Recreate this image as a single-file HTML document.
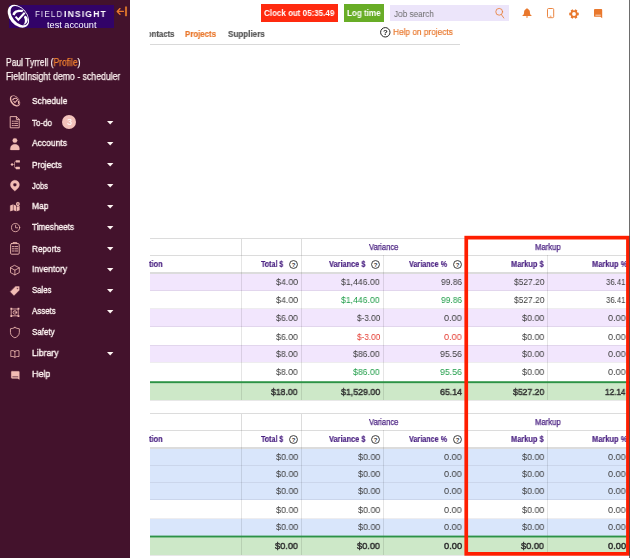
<!DOCTYPE html>
<html lang="en"><head><meta charset="utf-8"><title>FieldInsight - Projects</title><style>
html,body{margin:0;padding:0;background:#fff;}
body{width:630px;height:558px;position:relative;overflow:hidden;font-family:"Liberation Sans",sans-serif;}
.t{will-change:transform;position:absolute;white-space:nowrap;line-height:1;transform-origin:0 0;}
#w{position:absolute;left:0;top:0;width:630px;height:558px;}
.b{position:absolute;}
svg{position:absolute;overflow:visible;}
</style></head>
<body>
<div id="w">
<div class="b" style="left:0.00px;top:0.00px;width:130.00px;height:558.00px;background:#43122c;"></div>
<div class="b" style="left:8.60px;top:4.50px;width:105.20px;height:23.20px;background:#320368;"></div>
<svg style="left:6px;top:2px" width="28" height="28" viewBox="0 0 28 28">
<g transform="translate(12.4 14.3) rotate(50)">
<path fill="#fff" fill-rule="evenodd" d="M-13.00 0.00 A13 8.7 0 1 0 13.00 0.00 A13 8.7 0 1 0 -13.00 0.00 Z M-11.10 -1.15 A11.2 6.8 0 1 0 11.30 -1.15 A11.2 6.8 0 1 0 -11.10 -1.15 Z"/>
</g>
<g transform="scale(0.050176)" fill="#fff">
<path d="M130 255 C134 185 200 138 345 158 L326 204 C250 186 192 204 172 268 Z"/>
<path d="M378 268 C455 300 465 410 338 464 C386 420 386 350 356 304 Z"/>
<path d="M190 292 L246 352 L372 214" fill="none" stroke="#fff" stroke-width="40"/>
</g>
</svg>
<span class="t" style="left:34.50px;top:10.00px;font-size:8.9px;color:#e9e2f3;transform:scaleX(0.9093);letter-spacing:1.2px;">FIELD</span>
<span class="t" style="left:64.40px;top:10.00px;font-size:8.9px;color:#fff;transform:scaleX(0.9655);font-weight:700;letter-spacing:1.2px;">INSIGHT</span>
<span class="t" style="left:46.70px;top:21.00px;font-size:9.1px;color:#fff;transform:scaleX(1.0088);">test account</span>
<svg style="left:0;top:0" width="130" height="24" viewBox="0 0 130 24" fill="none" stroke="#e9782d">
<path d="M117.3 11.4 H123.4 M120 8.6 L117.2 11.4 L120 14.2" stroke-width="1.35" stroke-linecap="round" stroke-linejoin="round"/>
<path d="M126 6.5 V16.2" stroke-width="2.1" stroke="#cf6c2b"/></svg>
<span class="t" style="left:5.60px;top:58.00px;font-size:10px;color:#fff5f3;transform:scaleX(0.8491);-webkit-text-stroke:0.25px #fff5f3;">Paul Tyrrell (<span style="color:#f0812f;-webkit-text-stroke:0.25px #f0812f">Profile</span>)</span>
<span class="t" style="left:5.60px;top:72.00px;font-size:10px;color:#fff5f3;transform:scaleX(0.8721);-webkit-text-stroke:0.25px #fff5f3;">FieldInsight demo - scheduler</span>
<span class="t" style="left:31.60px;top:96.00px;font-size:9.9px;color:#fff5f3;transform:scaleX(0.8575);-webkit-text-stroke:0.38px #fff5f3;">Schedule</span>
<span class="t" style="left:31.60px;top:118.00px;font-size:9.9px;color:#fff5f3;transform:scaleX(0.8076);-webkit-text-stroke:0.38px #fff5f3;">To-do</span>
<svg style="left:107.2px;top:121.30px" width="6.4" height="3.4" viewBox="0 0 6.4 3.4"><path d="M0 0 H6.4 L3.2 3.4 Z" fill="#fff5f3"/></svg>
<span class="t" style="left:31.60px;top:138.00px;font-size:9.9px;color:#fff5f3;transform:scaleX(0.8595);-webkit-text-stroke:0.38px #fff5f3;">Accounts</span>
<svg style="left:107.2px;top:142.10px" width="6.4" height="3.4" viewBox="0 0 6.4 3.4"><path d="M0 0 H6.4 L3.2 3.4 Z" fill="#fff5f3"/></svg>
<span class="t" style="left:31.60px;top:160.00px;font-size:9.9px;color:#fff5f3;transform:scaleX(0.8361);-webkit-text-stroke:0.38px #fff5f3;">Projects</span>
<svg style="left:107.2px;top:163.30px" width="6.4" height="3.4" viewBox="0 0 6.4 3.4"><path d="M0 0 H6.4 L3.2 3.4 Z" fill="#fff5f3"/></svg>
<span class="t" style="left:31.60px;top:181.00px;font-size:9.9px;color:#fff5f3;transform:scaleX(0.7603);-webkit-text-stroke:0.38px #fff5f3;">Jobs</span>
<svg style="left:107.2px;top:184.40px" width="6.4" height="3.4" viewBox="0 0 6.4 3.4"><path d="M0 0 H6.4 L3.2 3.4 Z" fill="#fff5f3"/></svg>
<span class="t" style="left:31.60px;top:201.00px;font-size:9.9px;color:#fff5f3;transform:scaleX(0.8568);-webkit-text-stroke:0.38px #fff5f3;">Map</span>
<svg style="left:107.2px;top:205.20px" width="6.4" height="3.4" viewBox="0 0 6.4 3.4"><path d="M0 0 H6.4 L3.2 3.4 Z" fill="#fff5f3"/></svg>
<span class="t" style="left:31.60px;top:222.00px;font-size:9.9px;color:#fff5f3;transform:scaleX(0.8287);-webkit-text-stroke:0.38px #fff5f3;">Timesheets</span>
<svg style="left:107.2px;top:226.30px" width="6.4" height="3.4" viewBox="0 0 6.4 3.4"><path d="M0 0 H6.4 L3.2 3.4 Z" fill="#fff5f3"/></svg>
<span class="t" style="left:31.60px;top:244.00px;font-size:9.9px;color:#fff5f3;transform:scaleX(0.8279);-webkit-text-stroke:0.38px #fff5f3;">Reports</span>
<svg style="left:107.2px;top:247.30px" width="6.4" height="3.4" viewBox="0 0 6.4 3.4"><path d="M0 0 H6.4 L3.2 3.4 Z" fill="#fff5f3"/></svg>
<span class="t" style="left:31.60px;top:264.00px;font-size:9.9px;color:#fff5f3;transform:scaleX(0.8619);-webkit-text-stroke:0.38px #fff5f3;">Inventory</span>
<svg style="left:107.2px;top:268.00px" width="6.4" height="3.4" viewBox="0 0 6.4 3.4"><path d="M0 0 H6.4 L3.2 3.4 Z" fill="#fff5f3"/></svg>
<span class="t" style="left:31.60px;top:285.00px;font-size:9.9px;color:#fff5f3;transform:scaleX(0.7834);-webkit-text-stroke:0.38px #fff5f3;">Sales</span>
<svg style="left:107.2px;top:288.80px" width="6.4" height="3.4" viewBox="0 0 6.4 3.4"><path d="M0 0 H6.4 L3.2 3.4 Z" fill="#fff5f3"/></svg>
<span class="t" style="left:31.60px;top:306.00px;font-size:9.9px;color:#fff5f3;transform:scaleX(0.7977);-webkit-text-stroke:0.38px #fff5f3;">Assets</span>
<svg style="left:107.2px;top:310.30px" width="6.4" height="3.4" viewBox="0 0 6.4 3.4"><path d="M0 0 H6.4 L3.2 3.4 Z" fill="#fff5f3"/></svg>
<span class="t" style="left:31.60px;top:327.00px;font-size:9.9px;color:#fff5f3;transform:scaleX(0.8088);-webkit-text-stroke:0.38px #fff5f3;">Safety</span>
<span class="t" style="left:31.60px;top:348.00px;font-size:9.9px;color:#fff5f3;transform:scaleX(0.8790);-webkit-text-stroke:0.38px #fff5f3;">Library</span>
<svg style="left:107.2px;top:352.30px" width="6.4" height="3.4" viewBox="0 0 6.4 3.4"><path d="M0 0 H6.4 L3.2 3.4 Z" fill="#fff5f3"/></svg>
<span class="t" style="left:31.60px;top:369.00px;font-size:9.9px;color:#fff5f3;transform:scaleX(0.9037);-webkit-text-stroke:0.38px #fff5f3;">Help</span>
<div class="b" style="left:61.9px;top:115.4px;width:14px;height:14px;border-radius:50%;background:#f3c2bb"></div>
<span class="t" style="left:66.60px;top:118.00px;font-size:9px;color:#fff;transform:scaleX(0.9190);">3</span>
<svg style="left:9.0px;top:94.4px" width="13.6" height="13.6" viewBox="0 0 28 28">
<g transform="translate(12.4 14.3) rotate(50)">
<path fill="#f2bcb4" fill-rule="evenodd" d="M-13.00 0.00 A13 8.7 0 1 0 13.00 0.00 A13 8.7 0 1 0 -13.00 0.00 Z M-11.10 -1.15 A11.2 6.8 0 1 0 11.30 -1.15 A11.2 6.8 0 1 0 -11.10 -1.15 Z"/>
</g>
<g transform="scale(0.050176)" fill="#f2bcb4">
<path d="M130 255 C134 185 200 138 345 158 L326 204 C250 186 192 204 172 268 Z"/>
<path d="M378 268 C455 300 465 410 338 464 C386 420 386 350 356 304 Z"/>
<path d="M190 292 L246 352 L372 214" fill="none" stroke="#f2bcb4" stroke-width="44"/>
</g>
</svg>
<svg style="left:10.3px;top:116.2px" width="9.8" height="12.4" viewBox="0 0 9.8 12.4" fill="none" stroke="#f2bcb4" stroke-width="0.9" stroke-linecap="round" stroke-linejoin="round"><path d="M0.6 0.6 H6.4 L9.2 3.4 V11.8 H0.6 Z"/><path d="M6.4 0.6 V3.4 H9.2"/><path d="M2.2 5.2 H3.4 M4.6 5.2 H7.6 M2.2 7.4 H3.4 M4.6 7.4 H7.6 M2.2 9.6 H3.4 M4.6 9.6 H7.6"/></svg>
<svg style="left:10.3px;top:137.5px" width="9.8" height="12.3" viewBox="0 0 9.8 12.3" fill="#f2bcb4" stroke="#f2bcb4" stroke-width="0.2" stroke-linecap="round" stroke-linejoin="round"><circle cx="4.9" cy="2.5" r="2.3"/><path d="M0.3 11.2 C0.3 7.6 2.4 6.2 4.9 6.2 C7.4 6.2 9.5 7.6 9.5 11.2 C9.5 11.8 9.2 12.1 8.6 12.1 H1.2 C0.6 12.1 0.3 11.8 0.3 11.2 Z"/></svg>
<svg style="left:10px;top:160px" width="10.4" height="9.6" viewBox="10 160 10.4 9.6" fill="#f2bcb4">
<path d="M12.05 162.9 L13.6 164.45 L12.05 166 L10.5 164.45 Z"/>
<path d="M13.4 164.45 H14.5 M15.8 161.4 C14.7 161.4 14.5 162 14.5 163 V165.9 C14.5 166.9 14.7 168 15.8 168" fill="none" stroke="#f2bcb4" stroke-width="0.7" opacity="0.8"/>
<rect x="15.7" y="160.2" width="4.2" height="2.4" rx="0.4"/><rect x="15.7" y="166.8" width="4.2" height="2.4" rx="0.4"/>
</svg>
<svg style="left:10.1px;top:180.2px" width="9.8" height="11.3" viewBox="0 0 9.4 10.8" fill="#f2bcb4" stroke="#f2bcb4" stroke-width="0.2" stroke-linecap="round" stroke-linejoin="round"><path fill-rule="evenodd" d="M4.7 0.2 A4.4 4.4 0 0 1 9.1 4.6 C9.1 7.2 6 9.6 4.7 10.7 C3.4 9.6 0.3 7.2 0.3 4.6 A4.4 4.4 0 0 1 4.7 0.2 Z M4.7 2.9 A1.7 1.7 0 1 0 4.7 6.3 A1.7 1.7 0 1 0 4.7 2.9 Z"/></svg>
<svg style="left:10.3px;top:202.2px" width="9.9" height="9.4" viewBox="0 0 9.9 9.4" fill="#f2bcb4" stroke="#f2bcb4" stroke-width="0.1" stroke-linecap="round" stroke-linejoin="round"><path d="M0.2 3.6 L2.9 2.6 V8.4 L0.2 9.3 Z M3.5 2.6 L6.2 3.8 V9.3 L3.5 8.3 Z M6.8 5 L9.6 4 V8.3 L6.8 9.3 Z"/><path fill-rule="evenodd" d="M7.9 0.1 A1.9 1.9 0 0 1 9.8 2 C9.8 3.1 8.6 4 7.9 4.8 C7.2 4 6 3.1 6 2 A1.9 1.9 0 0 1 7.9 0.1 Z M7.9 1.3 A0.7 0.7 0 1 0 7.9 2.7 A0.7 0.7 0 1 0 7.9 1.3Z"/></svg>
<svg style="left:10.6px;top:223.3px" width="9.2" height="9.2" viewBox="0 0 9.2 9.2" fill="none" stroke="#f2bcb4" stroke-width="0.8" stroke-linecap="round" stroke-linejoin="round"><circle cx="4.6" cy="4.6" r="4.1"/><path d="M4.6 2.2 V4.8 H6.6"/></svg>
<svg style="left:10.3px;top:241.8px" width="9.8" height="12.8" viewBox="0 0 9.8 12.8" fill="none" stroke="#f2bcb4" stroke-width="0.9" stroke-linecap="round" stroke-linejoin="round"><rect x="0.6" y="1.6" width="8.6" height="10.6" rx="1"/><path d="M3 1.6 V0.6 H6.8 V1.6" /><path d="M2.3 4.6 H3.6 M4.8 4.6 H7.6 M2.3 6.8 H3.6 M4.8 6.8 H7.6 M2.3 9 H3.6 M4.8 9 H7.6"/></svg>
<svg style="left:10.3px;top:264.5px" width="9.8" height="10.4" viewBox="0 0 9.8 10.4" fill="none" stroke="#f2bcb4" stroke-width="0.8" stroke-linecap="round" stroke-linejoin="round"><path d="M4.9 0.5 L9.3 2.8 V7.6 L4.9 9.9 L0.5 7.6 V2.8 Z M0.5 2.8 L4.9 5.2 L9.3 2.8 M4.9 5.2 V9.9"/></svg>
<svg style="left:10.3px;top:285.8px" width="9.8" height="9.8" viewBox="0 0 9.8 9.8" fill="#f2bcb4" stroke="#f2bcb4" stroke-width="0.4" stroke-linecap="round" stroke-linejoin="round"><path fill-rule="evenodd" d="M5.6 0.6 L9.2 0.6 L9.2 4.2 L4 9.4 L0.4 5.8 Z M7.5 1.6 A0.8 0.8 0 1 0 7.5 3.2 A0.8 0.8 0 1 0 7.5 1.6Z"/></svg>
<svg style="left:10.3px;top:306.8px" width="9.8" height="10.8" viewBox="0 0 9.8 10.8" fill="none" stroke="#f2bcb4" stroke-width="0.8" stroke-linecap="round" stroke-linejoin="round"><rect x="1.6" y="2" width="6.6" height="6.8"/><circle cx="4.9" cy="5.4" r="1.8"/><path d="M4.9 4.4 V5.5 H5.7" stroke-width="0.6"/><rect x="0.4" y="0.8" width="1.8" height="1.8" fill="#f2bcb4" stroke="none"/><rect x="7.6" y="0.8" width="1.8" height="1.8" fill="#f2bcb4" stroke="none"/><rect x="0.4" y="8.2" width="1.8" height="1.8" fill="#f2bcb4" stroke="none"/><rect x="7.6" y="8.2" width="1.8" height="1.8" fill="#f2bcb4" stroke="none"/></svg>
<svg style="left:10.4px;top:327.3px" width="9.8" height="11.2" viewBox="0 0 9.4 10.8" fill="none" stroke="#f2bcb4" stroke-width="0.8" stroke-linecap="round" stroke-linejoin="round"><path d="M4.7 0.5 C6 1.2 7.6 1.6 9 1.7 V5.2 C9 8 6.8 9.7 4.7 10.4 C2.6 9.7 0.4 8 0.4 5.2 V1.7 C1.8 1.6 3.4 1.2 4.7 0.5 Z"/></svg>
<svg style="left:10.3px;top:350.3px" width="9.8" height="8" viewBox="0 0 9.8 8" fill="none" stroke="#f2bcb4" stroke-width="0.8" stroke-linecap="round" stroke-linejoin="round"><path d="M4.9 1.4 C3.8 0.5 2.2 0.4 0.8 0.7 V6.6 C2.2 6.3 3.8 6.5 4.9 7.3 C6 6.5 7.6 6.3 9 6.6 V0.7 C7.6 0.4 6 0.5 4.9 1.4 Z M4.9 1.4 V7.3"/></svg>
<svg style="left:10.7px;top:370.5px" width="8.6" height="8.8" viewBox="0 0 8.6 8.8" fill="#f2bcb4" stroke="#f2bcb4" stroke-width="0.2" stroke-linecap="round" stroke-linejoin="round"><path d="M1 0.2 H7.6 A0.8 0.8 0 0 1 8.4 1 V8.6 L6.6 7.4 H1 A0.8 0.8 0 0 1 0.2 6.6 V1 A0.8 0.8 0 0 1 1 0.2 Z"/><path d="M1.8 5.8 H6.8" stroke="#43122c" stroke-width="0.7"/></svg>
<div class="b" style="left:261.00px;top:4.00px;width:76.90px;height:17.70px;background:#ff2a0f;"></div>
<span class="t" style="left:263.90px;top:9.00px;font-size:8.4px;color:#fff;transform:scaleX(0.9544);font-weight:700;">Clock out 05:35.49</span>
<div class="b" style="left:344.30px;top:4.00px;width:39.60px;height:17.50px;background:#68ad26;"></div>
<span class="t" style="left:347.40px;top:9.00px;font-size:8.4px;color:#fff;transform:scaleX(0.9629);font-weight:700;">Log time</span>
<div class="b" style="left:390.30px;top:4.60px;width:118.40px;height:16.30px;background:#ece5fa;"></div>
<span class="t" style="left:394.00px;top:9.00px;font-size:9.6px;color:#6a6a6a;transform:scaleX(0.8518);">Job search</span>
<svg style="left:495px;top:7.5px" width="10" height="11" viewBox="0 0 10 11" fill="none" stroke="#e9782d" stroke-width="0.8" stroke-linecap="round"><circle cx="4.2" cy="3.8" r="3.4"/><path d="M6.4 6.6 L8.8 10"/></svg>
<svg style="left:522px;top:8.2px" width="10" height="10" viewBox="0 0 10 10" fill="#e9782d"><path d="M5 0.2 C5.5 0.2 5.8 0.5 5.8 0.9 C7.2 1.3 7.9 2.5 7.9 4 C7.9 5.8 8.4 6.7 9.6 7.6 V8.1 H0.4 V7.6 C1.6 6.7 2.1 5.8 2.1 4 C2.1 2.5 2.8 1.3 4.2 0.9 C4.2 0.5 4.5 0.2 5 0.2 Z M3.9 8.6 H6.1 A1.1 1.1 0 0 1 3.9 8.6 Z"/></svg>
<svg style="left:547px;top:8.3px" width="7.2" height="10.2" viewBox="0 0 7.2 10.2" fill="none" stroke="#e9782d" stroke-width="0.9"><rect x="0.5" y="0.5" width="6.2" height="9.2" rx="1.1"/><path d="M2.8 8.2 H4.4" stroke-width="0.8"/></svg>
<svg style="left:569.3px;top:8.8px" width="10" height="10" viewBox="0 0 10 10"><path fill-rule="evenodd" fill="#e9782d" d="M9.76 3.84 L9.76 6.16 L8.32 6.40 L7.87 7.17 L8.39 8.54 L6.37 9.70 L5.44 8.57 L4.56 8.57 L3.63 9.70 L1.61 8.54 L2.13 7.17 L1.68 6.40 L0.24 6.16 L0.24 3.84 L1.68 3.60 L2.13 2.83 L1.61 1.46 L3.63 0.30 L4.56 1.43 L5.44 1.43 L6.37 0.30 L8.39 1.46 L7.87 2.83 L8.32 3.60 Z M5 3.1 A1.9 1.9 0 1 0 5 6.9 A1.9 1.9 0 1 0 5 3.1 Z"/></svg>
<svg style="left:594px;top:8.9px" width="8.2" height="9.2" viewBox="0 0 8.2 9.2"><path fill="#e9782d" d="M0.9 0 H7.3 A0.9 0.9 0 0 1 8.2 0.9 V9.2 L6.4 7.8 H0.9 A0.9 0.9 0 0 1 0 6.9 V0.9 A0.9 0.9 0 0 1 0.9 0 Z"/><path d="M1.4 6.2 H6.8" stroke="#fff" stroke-width="0.7"/></svg>
<span class="t" style="left:146.90px;top:30.00px;font-size:9.2px;color:#555;transform:scaleX(0.8375);font-weight:700;clip-path:inset(-2px -2px -2px 3.10px);-webkit-text-stroke:0.2px #555;">ontacts</span>
<span class="t" style="left:185.30px;top:30.00px;font-size:9.2px;color:#e9782d;transform:scaleX(0.8539);font-weight:700;-webkit-text-stroke:0.2px #e9782d;">Projects</span>
<span class="t" style="left:227.70px;top:30.00px;font-size:9.2px;color:#555;transform:scaleX(0.8778);font-weight:700;-webkit-text-stroke:0.2px #555;">Suppliers</span>
<div class="b" style="left:150.00px;top:44.10px;width:309.50px;height:1.00px;background:#d9d9d9;"></div>
<svg style="left:379.8px;top:26.9px" width="10.6" height="10.6" viewBox="0 0 10.6 10.6"><circle cx="5.3" cy="5.3" r="4.7" fill="none" stroke="#222" stroke-width="1"/><text x="5.3" y="8.1" font-size="7.8" font-weight="700" text-anchor="middle" fill="#222" font-family="Liberation Sans, sans-serif">?</text></svg>
<span class="t" style="left:393.00px;top:28.00px;font-size:9.2px;color:#e9782d;transform:scaleX(0.9010);-webkit-text-stroke:0.2px #e9782d;">Help on projects</span>
<div class="b" style="left:150.00px;top:273.70px;width:480.00px;height:17.20px;background:#f2e6fd;"></div>
<div class="b" style="left:150.00px;top:308.90px;width:480.00px;height:17.70px;background:#f2e6fd;"></div>
<div class="b" style="left:150.00px;top:345.40px;width:480.00px;height:17.10px;background:#f2e6fd;"></div>
<div class="b" style="left:150.00px;top:381.30px;width:480.00px;height:18.40px;background:#cde8c8;"></div>
<div class="b" style="left:150.00px;top:237.70px;width:480.00px;height:1.00px;background:#dcdcdc;"></div>
<div class="b" style="left:150.00px;top:254.80px;width:480.00px;height:1.00px;background:#dcdcdc;"></div>
<div class="b" style="left:150.00px;top:272.00px;width:480.00px;height:1.90px;background:#dcdcdc;"></div>
<div class="b" style="left:150.00px;top:290.40px;width:480.00px;height:1.00px;background:rgba(40,30,50,0.08);"></div>
<div class="b" style="left:150.00px;top:308.40px;width:480.00px;height:1.00px;background:rgba(40,30,50,0.08);"></div>
<div class="b" style="left:150.00px;top:326.10px;width:480.00px;height:1.00px;background:rgba(40,30,50,0.08);"></div>
<div class="b" style="left:150.00px;top:344.90px;width:480.00px;height:1.00px;background:rgba(40,30,50,0.08);"></div>
<div class="b" style="left:150.00px;top:362.00px;width:480.00px;height:1.00px;background:rgba(40,30,50,0.08);"></div>
<div class="b" style="left:150.00px;top:400.00px;width:480.00px;height:1.00px;background:rgba(0,0,0,0.09);"></div>
<div class="b" style="left:240.90px;top:238.20px;width:1.00px;height:17.10px;background:#dcdcdc;"></div>
<div class="b" style="left:301.00px;top:238.20px;width:1.00px;height:17.10px;background:#dcdcdc;"></div>
<div class="b" style="left:465.00px;top:238.20px;width:1.00px;height:17.10px;background:#dcdcdc;"></div>
<div class="b" style="left:240.90px;top:255.30px;width:1.00px;height:144.40px;background:rgba(0,0,0,0.10);"></div>
<div class="b" style="left:301.00px;top:255.30px;width:1.00px;height:144.40px;background:rgba(0,0,0,0.10);"></div>
<div class="b" style="left:383.00px;top:255.30px;width:1.00px;height:144.40px;background:rgba(0,0,0,0.10);"></div>
<div class="b" style="left:465.00px;top:255.30px;width:1.00px;height:144.40px;background:rgba(0,0,0,0.10);"></div>
<div class="b" style="left:546.90px;top:255.30px;width:1.00px;height:144.40px;background:rgba(0,0,0,0.10);"></div>
<svg style="left:150px;top:381px" width="480" height="3" viewBox="0 381 480 3"><rect x="0" y="381.30" width="480" height="1.85" fill="#2c9246"/></svg>
<span class="t" style="left:368.90px;top:243.00px;font-size:8.7px;color:#4a2182;transform:scaleX(0.8726);-webkit-text-stroke:0.25px #4a2182;">Variance</span>
<span class="t" style="left:535.00px;top:243.00px;font-size:8.7px;color:#4a2182;transform:scaleX(0.8824);-webkit-text-stroke:0.25px #4a2182;">Markup</span>
<span class="t" style="left:149.30px;top:260.00px;font-size:8.6px;color:#4a2182;transform:scaleX(0.8693);font-weight:700;clip-path:inset(-2px -2px -2px 0.81px);-webkit-text-stroke:0.15px #4a2182;">tion</span>
<span class="t" style="left:260.70px;top:260.00px;font-size:8.6px;color:#4a2182;transform:scaleX(0.8236);font-weight:700;-webkit-text-stroke:0.15px #4a2182;">Total $</span>
<span class="t" style="left:328.50px;top:260.00px;font-size:8.6px;color:#4a2182;transform:scaleX(0.8577);font-weight:700;-webkit-text-stroke:0.15px #4a2182;">Variance $</span>
<span class="t" style="left:408.70px;top:260.00px;font-size:8.6px;color:#4a2182;transform:scaleX(0.8389);font-weight:700;-webkit-text-stroke:0.15px #4a2182;">Variance %</span>
<span class="t" style="left:511.40px;top:260.00px;font-size:8.6px;color:#4a2182;transform:scaleX(0.8661);font-weight:700;-webkit-text-stroke:0.15px #4a2182;">Markup $</span>
<span class="t" style="left:591.80px;top:260.00px;font-size:8.6px;color:#4a2182;transform:scaleX(0.8715);font-weight:700;-webkit-text-stroke:0.15px #4a2182;">Markup %</span>
<svg style="left:288.85px;top:259.60px" width="9" height="9" viewBox="0 0 9 9"><circle cx="4.5" cy="4.5" r="3.95" fill="none" stroke="#2a2a2a" stroke-width="0.9"/><text x="4.5" y="6.6" font-size="6" font-weight="700" text-anchor="middle" fill="#333" font-family="Liberation Sans, sans-serif">?</text></svg>
<svg style="left:371.00px;top:259.60px" width="9" height="9" viewBox="0 0 9 9"><circle cx="4.5" cy="4.5" r="3.95" fill="none" stroke="#2a2a2a" stroke-width="0.9"/><text x="4.5" y="6.6" font-size="6" font-weight="700" text-anchor="middle" fill="#333" font-family="Liberation Sans, sans-serif">?</text></svg>
<svg style="left:452.90px;top:259.60px" width="9" height="9" viewBox="0 0 9 9"><circle cx="4.5" cy="4.5" r="3.95" fill="none" stroke="#2a2a2a" stroke-width="0.9"/><text x="4.5" y="6.6" font-size="6" font-weight="700" text-anchor="middle" fill="#333" font-family="Liberation Sans, sans-serif">?</text></svg>
<span class="t" style="left:275.70px;top:278.00px;font-size:9.3px;color:#3b3b3b;transform:scaleX(0.9539);">$4.00</span>
<span class="t" style="left:341.30px;top:278.00px;font-size:9.3px;color:#3b3b3b;transform:scaleX(0.9330);">$1,446.00</span>
<span class="t" style="left:440.80px;top:278.00px;font-size:9.3px;color:#3b3b3b;transform:scaleX(0.9066);">99.86</span>
<span class="t" style="left:513.70px;top:278.00px;font-size:9.3px;color:#3b3b3b;transform:scaleX(0.9043);">$527.20</span>
<span class="t" style="left:606.30px;top:278.00px;font-size:9.3px;color:#3b3b3b;transform:scaleX(0.8379);">36.41</span>
<span class="t" style="left:275.70px;top:296.00px;font-size:9.3px;color:#3b3b3b;transform:scaleX(0.9539);">$4.00</span>
<span class="t" style="left:341.30px;top:296.00px;font-size:9.3px;color:#1f9d48;transform:scaleX(0.9330);">$1,446.00</span>
<span class="t" style="left:440.80px;top:296.00px;font-size:9.3px;color:#1f9d48;transform:scaleX(0.9066);">99.86</span>
<span class="t" style="left:513.70px;top:296.00px;font-size:9.3px;color:#3b3b3b;transform:scaleX(0.9043);">$527.20</span>
<span class="t" style="left:606.30px;top:296.00px;font-size:9.3px;color:#3b3b3b;transform:scaleX(0.8379);">36.41</span>
<span class="t" style="left:276.00px;top:314.00px;font-size:9.3px;color:#3b3b3b;transform:scaleX(0.9410);">$6.00</span>
<span class="t" style="left:356.70px;top:314.00px;font-size:9.3px;color:#3b3b3b;transform:scaleX(0.8798);">$-3.00</span>
<span class="t" style="left:444.30px;top:314.00px;font-size:9.3px;color:#3b3b3b;transform:scaleX(0.9723);">0.00</span>
<span class="t" style="left:521.70px;top:314.00px;font-size:9.3px;color:#3b3b3b;transform:scaleX(0.9625);">$0.00</span>
<span class="t" style="left:608.20px;top:314.00px;font-size:9.3px;color:#3b3b3b;transform:scaleX(0.9723);">0.00</span>
<span class="t" style="left:276.00px;top:333.00px;font-size:9.3px;color:#3b3b3b;transform:scaleX(0.9410);">$6.00</span>
<span class="t" style="left:356.70px;top:333.00px;font-size:9.3px;color:#e53a30;transform:scaleX(0.8798);">$-3.00</span>
<span class="t" style="left:444.30px;top:333.00px;font-size:9.3px;color:#e53a30;transform:scaleX(0.9723);">0.00</span>
<span class="t" style="left:521.70px;top:333.00px;font-size:9.3px;color:#3b3b3b;transform:scaleX(0.9625);">$0.00</span>
<span class="t" style="left:608.20px;top:333.00px;font-size:9.3px;color:#3b3b3b;transform:scaleX(0.9723);">0.00</span>
<span class="t" style="left:276.10px;top:350.00px;font-size:9.3px;color:#3b3b3b;transform:scaleX(0.9367);">$8.00</span>
<span class="t" style="left:353.20px;top:350.00px;font-size:9.3px;color:#3b3b3b;transform:scaleX(0.9387);">$86.00</span>
<span class="t" style="left:440.00px;top:350.00px;font-size:9.3px;color:#3b3b3b;transform:scaleX(0.9410);">95.56</span>
<span class="t" style="left:521.70px;top:350.00px;font-size:9.3px;color:#3b3b3b;transform:scaleX(0.9625);">$0.00</span>
<span class="t" style="left:608.20px;top:350.00px;font-size:9.3px;color:#3b3b3b;transform:scaleX(0.9723);">0.00</span>
<span class="t" style="left:276.10px;top:368.00px;font-size:9.3px;color:#3b3b3b;transform:scaleX(0.9367);">$8.00</span>
<span class="t" style="left:353.20px;top:368.00px;font-size:9.3px;color:#1f9d48;transform:scaleX(0.9387);">$86.00</span>
<span class="t" style="left:440.00px;top:368.00px;font-size:9.3px;color:#1f9d48;transform:scaleX(0.9410);">95.56</span>
<span class="t" style="left:521.70px;top:368.00px;font-size:9.3px;color:#3b3b3b;transform:scaleX(0.9625);">$0.00</span>
<span class="t" style="left:608.20px;top:368.00px;font-size:9.3px;color:#3b3b3b;transform:scaleX(0.9723);">0.00</span>
<span class="t" style="left:271.30px;top:388.00px;font-size:9.3px;color:#303030;transform:scaleX(0.9351);-webkit-text-stroke:0.45px #303030;">$18.00</span>
<span class="t" style="left:340.70px;top:388.00px;font-size:9.3px;color:#303030;transform:scaleX(0.9475);-webkit-text-stroke:0.45px #303030;">$1,529.00</span>
<span class="t" style="left:439.90px;top:388.00px;font-size:9.3px;color:#303030;transform:scaleX(0.9453);-webkit-text-stroke:0.45px #303030;">65.14</span>
<span class="t" style="left:512.90px;top:388.00px;font-size:9.3px;color:#303030;transform:scaleX(0.9281);-webkit-text-stroke:0.45px #303030;">$527.20</span>
<span class="t" style="left:605.30px;top:388.00px;font-size:9.3px;color:#303030;transform:scaleX(0.8809);-webkit-text-stroke:0.45px #303030;">12.14</span>
<div class="b" style="left:150.00px;top:449.00px;width:480.00px;height:16.20px;background:#d9e6fb;"></div>
<div class="b" style="left:150.00px;top:465.20px;width:480.00px;height:17.00px;background:#d9e6fb;"></div>
<div class="b" style="left:150.00px;top:482.20px;width:480.00px;height:17.60px;background:#d9e6fb;"></div>
<div class="b" style="left:150.00px;top:518.90px;width:480.00px;height:16.70px;background:#d9e6fb;"></div>
<div class="b" style="left:150.00px;top:535.60px;width:480.00px;height:19.20px;background:#cde8c8;"></div>
<div class="b" style="left:150.00px;top:412.90px;width:480.00px;height:1.00px;background:#dcdcdc;"></div>
<div class="b" style="left:150.00px;top:429.90px;width:480.00px;height:1.00px;background:#dcdcdc;"></div>
<div class="b" style="left:150.00px;top:447.40px;width:480.00px;height:1.90px;background:#dcdcdc;"></div>
<div class="b" style="left:150.00px;top:464.70px;width:480.00px;height:1.00px;background:rgba(40,30,50,0.08);"></div>
<div class="b" style="left:150.00px;top:481.70px;width:480.00px;height:1.00px;background:rgba(40,30,50,0.08);"></div>
<div class="b" style="left:150.00px;top:499.30px;width:480.00px;height:1.00px;background:rgba(40,30,50,0.08);"></div>
<div class="b" style="left:150.00px;top:518.40px;width:480.00px;height:1.00px;background:rgba(40,30,50,0.08);"></div>
<div class="b" style="left:150.00px;top:555.00px;width:480.00px;height:1.00px;background:rgba(0,0,0,0.09);"></div>
<div class="b" style="left:240.90px;top:413.40px;width:1.00px;height:17.00px;background:#dcdcdc;"></div>
<div class="b" style="left:301.00px;top:413.40px;width:1.00px;height:17.00px;background:#dcdcdc;"></div>
<div class="b" style="left:465.00px;top:413.40px;width:1.00px;height:17.00px;background:#dcdcdc;"></div>
<div class="b" style="left:240.90px;top:430.40px;width:1.00px;height:124.40px;background:rgba(0,0,0,0.10);"></div>
<div class="b" style="left:301.00px;top:430.40px;width:1.00px;height:124.40px;background:rgba(0,0,0,0.10);"></div>
<div class="b" style="left:383.00px;top:430.40px;width:1.00px;height:124.40px;background:rgba(0,0,0,0.10);"></div>
<div class="b" style="left:465.00px;top:430.40px;width:1.00px;height:124.40px;background:rgba(0,0,0,0.10);"></div>
<div class="b" style="left:546.90px;top:430.40px;width:1.00px;height:124.40px;background:rgba(0,0,0,0.10);"></div>
<svg style="left:150px;top:535px" width="480" height="3" viewBox="0 535 480 3"><rect x="0" y="535.60" width="480" height="1.85" fill="#2c9246"/></svg>
<span class="t" style="left:368.90px;top:418.00px;font-size:8.7px;color:#4a2182;transform:scaleX(0.8726);-webkit-text-stroke:0.25px #4a2182;">Variance</span>
<span class="t" style="left:535.00px;top:418.00px;font-size:8.7px;color:#4a2182;transform:scaleX(0.8824);-webkit-text-stroke:0.25px #4a2182;">Markup</span>
<span class="t" style="left:149.30px;top:435.00px;font-size:8.6px;color:#4a2182;transform:scaleX(0.8693);font-weight:700;clip-path:inset(-2px -2px -2px 0.81px);-webkit-text-stroke:0.15px #4a2182;">tion</span>
<span class="t" style="left:260.70px;top:435.00px;font-size:8.6px;color:#4a2182;transform:scaleX(0.8236);font-weight:700;-webkit-text-stroke:0.15px #4a2182;">Total $</span>
<span class="t" style="left:328.50px;top:435.00px;font-size:8.6px;color:#4a2182;transform:scaleX(0.8577);font-weight:700;-webkit-text-stroke:0.15px #4a2182;">Variance $</span>
<span class="t" style="left:408.70px;top:435.00px;font-size:8.6px;color:#4a2182;transform:scaleX(0.8389);font-weight:700;-webkit-text-stroke:0.15px #4a2182;">Variance %</span>
<span class="t" style="left:511.40px;top:435.00px;font-size:8.6px;color:#4a2182;transform:scaleX(0.8661);font-weight:700;-webkit-text-stroke:0.15px #4a2182;">Markup $</span>
<span class="t" style="left:591.80px;top:435.00px;font-size:8.6px;color:#4a2182;transform:scaleX(0.8715);font-weight:700;-webkit-text-stroke:0.15px #4a2182;">Markup %</span>
<svg style="left:288.85px;top:434.90px" width="9" height="9" viewBox="0 0 9 9"><circle cx="4.5" cy="4.5" r="3.95" fill="none" stroke="#2a2a2a" stroke-width="0.9"/><text x="4.5" y="6.6" font-size="6" font-weight="700" text-anchor="middle" fill="#333" font-family="Liberation Sans, sans-serif">?</text></svg>
<svg style="left:371.00px;top:434.90px" width="9" height="9" viewBox="0 0 9 9"><circle cx="4.5" cy="4.5" r="3.95" fill="none" stroke="#2a2a2a" stroke-width="0.9"/><text x="4.5" y="6.6" font-size="6" font-weight="700" text-anchor="middle" fill="#333" font-family="Liberation Sans, sans-serif">?</text></svg>
<svg style="left:452.90px;top:434.90px" width="9" height="9" viewBox="0 0 9 9"><circle cx="4.5" cy="4.5" r="3.95" fill="none" stroke="#2a2a2a" stroke-width="0.9"/><text x="4.5" y="6.6" font-size="6" font-weight="700" text-anchor="middle" fill="#333" font-family="Liberation Sans, sans-serif">?</text></svg>
<span class="t" style="left:275.50px;top:453.00px;font-size:9.3px;color:#3b3b3b;transform:scaleX(0.9625);">$0.00</span>
<span class="t" style="left:357.50px;top:453.00px;font-size:9.3px;color:#3b3b3b;transform:scaleX(0.9625);">$0.00</span>
<span class="t" style="left:444.30px;top:453.00px;font-size:9.3px;color:#3b3b3b;transform:scaleX(0.9723);">0.00</span>
<span class="t" style="left:521.70px;top:453.00px;font-size:9.3px;color:#3b3b3b;transform:scaleX(0.9625);">$0.00</span>
<span class="t" style="left:608.20px;top:453.00px;font-size:9.3px;color:#3b3b3b;transform:scaleX(0.9723);">0.00</span>
<span class="t" style="left:275.50px;top:470.00px;font-size:9.3px;color:#3b3b3b;transform:scaleX(0.9625);">$0.00</span>
<span class="t" style="left:357.50px;top:470.00px;font-size:9.3px;color:#3b3b3b;transform:scaleX(0.9625);">$0.00</span>
<span class="t" style="left:444.30px;top:470.00px;font-size:9.3px;color:#3b3b3b;transform:scaleX(0.9723);">0.00</span>
<span class="t" style="left:521.70px;top:470.00px;font-size:9.3px;color:#3b3b3b;transform:scaleX(0.9625);">$0.00</span>
<span class="t" style="left:608.20px;top:470.00px;font-size:9.3px;color:#3b3b3b;transform:scaleX(0.9723);">0.00</span>
<span class="t" style="left:275.50px;top:487.00px;font-size:9.3px;color:#3b3b3b;transform:scaleX(0.9625);">$0.00</span>
<span class="t" style="left:357.50px;top:487.00px;font-size:9.3px;color:#3b3b3b;transform:scaleX(0.9625);">$0.00</span>
<span class="t" style="left:444.30px;top:487.00px;font-size:9.3px;color:#3b3b3b;transform:scaleX(0.9723);">0.00</span>
<span class="t" style="left:521.70px;top:487.00px;font-size:9.3px;color:#3b3b3b;transform:scaleX(0.9625);">$0.00</span>
<span class="t" style="left:608.20px;top:487.00px;font-size:9.3px;color:#3b3b3b;transform:scaleX(0.9723);">0.00</span>
<span class="t" style="left:275.50px;top:506.00px;font-size:9.3px;color:#3b3b3b;transform:scaleX(0.9625);">$0.00</span>
<span class="t" style="left:357.50px;top:506.00px;font-size:9.3px;color:#3b3b3b;transform:scaleX(0.9625);">$0.00</span>
<span class="t" style="left:444.30px;top:506.00px;font-size:9.3px;color:#3b3b3b;transform:scaleX(0.9723);">0.00</span>
<span class="t" style="left:521.70px;top:506.00px;font-size:9.3px;color:#3b3b3b;transform:scaleX(0.9625);">$0.00</span>
<span class="t" style="left:608.20px;top:506.00px;font-size:9.3px;color:#3b3b3b;transform:scaleX(0.9723);">0.00</span>
<span class="t" style="left:275.50px;top:523.00px;font-size:9.3px;color:#3b3b3b;transform:scaleX(0.9625);">$0.00</span>
<span class="t" style="left:357.50px;top:523.00px;font-size:9.3px;color:#3b3b3b;transform:scaleX(0.9625);">$0.00</span>
<span class="t" style="left:444.30px;top:523.00px;font-size:9.3px;color:#3b3b3b;transform:scaleX(0.9723);">0.00</span>
<span class="t" style="left:521.70px;top:523.00px;font-size:9.3px;color:#3b3b3b;transform:scaleX(0.9625);">$0.00</span>
<span class="t" style="left:608.20px;top:523.00px;font-size:9.3px;color:#3b3b3b;transform:scaleX(0.9723);">0.00</span>
<span class="t" style="left:274.90px;top:542.00px;font-size:9.3px;color:#303030;transform:scaleX(0.9883);-webkit-text-stroke:0.45px #303030;">$0.00</span>
<span class="t" style="left:356.90px;top:542.00px;font-size:9.3px;color:#303030;transform:scaleX(0.9883);-webkit-text-stroke:0.45px #303030;">$0.00</span>
<span class="t" style="left:443.70px;top:542.00px;font-size:9.3px;color:#303030;transform:scaleX(1.0055);-webkit-text-stroke:0.45px #303030;">0.00</span>
<span class="t" style="left:521.10px;top:542.00px;font-size:9.3px;color:#303030;transform:scaleX(0.9883);-webkit-text-stroke:0.45px #303030;">$0.00</span>
<span class="t" style="left:607.60px;top:542.00px;font-size:9.3px;color:#303030;transform:scaleX(1.0055);-webkit-text-stroke:0.45px #303030;">0.00</span>
<svg style="left:0;top:0" width="630" height="558" viewBox="0 0 630 558"><rect x="466.25" y="237.65" width="161.7" height="316.2" fill="none" stroke="#ff1e00" stroke-width="3.7"/></svg>
<div class="b" style="left:628.80px;top:0.00px;width:1.20px;height:558.00px;background:rgba(60,60,60,0.75);"></div>
</div>
</body></html>
